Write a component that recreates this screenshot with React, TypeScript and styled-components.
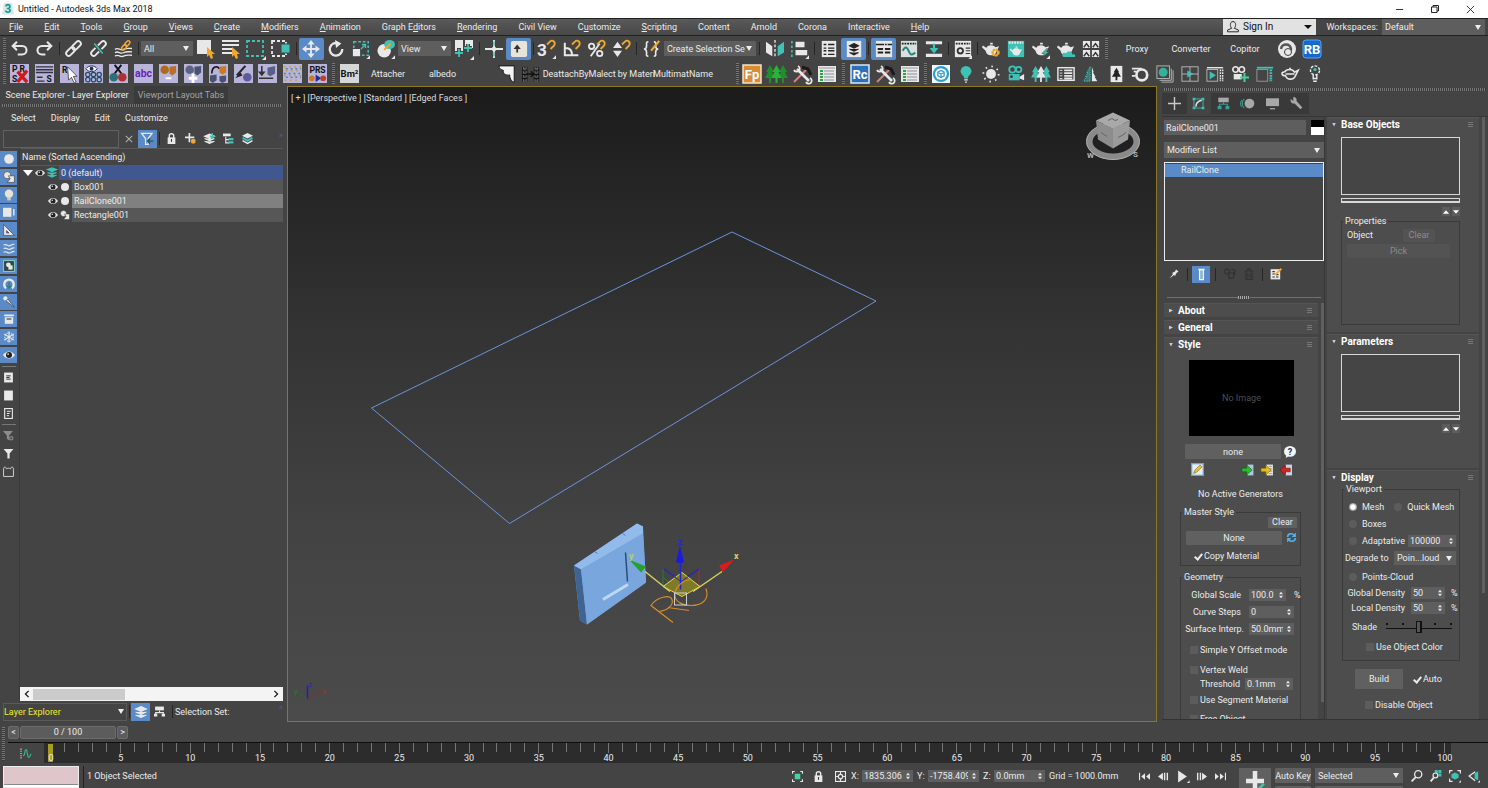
import React, { ReactNode } from "react";
import styled, { createGlobalStyle, css } from "styled-components";

const c = {
  bg: "#444444",
  panel: "#4d4d4d",
  field: "#5e5e5e",
  dark: "#383838",
  line: "#303030",
  text: "#ececec",
  dim: "#8c8c8c",
  accent: "#5a8bc8",
  teal: "#3fc1b6",
  amber: "#f2a72e",
  lilac: "#b8b4da",
};

const Global = createGlobalStyle`
  * { box-sizing: border-box; }
  body { margin: 0; background: ${c.bg}; color: ${c.text}; font-family: Roboto, sans-serif; font-size: 9px; line-height: 12px; }
  button, input, select { font: inherit; color: inherit; margin: 0; padding: 0; border: 0; background: none; }
  ul { margin: 0; padding: 0; list-style: none; }
`;

/* ---------- icons ---------- */

const W = "#e8e8e8";
const T = c.teal;
const A = c.amber;

const Glyph = styled.svg<{ $s?: number }>`
  display: block;
  flex: none;
  width: ${(p) => p.$s ?? 20}px;
  height: ${(p) => p.$s ?? 20}px;
  overflow: visible;
`;

const st = (color: string, w = 1.5) => ({ fill: "none", stroke: color, strokeWidth: w });
const Lilac = () => <rect x="0" y="0" width="20" height="20" fill={c.lilac} />;
const Flyout = () => <path d="M20 17v4h-4z" fill={W} />;
const Magnet = () => <path d="M10 5l3-3c3-3 7 0 5 4l-4 4" {...st(A, 2)} />;
const Teapot = ({ fill = W }: { fill?: string }) => (
  <path d="M5 8c2-3 8-3 10 0l4-1-3 6c-1 3-3 4-6 4s-5-1-6-5L0 8l1-2 4 3zM9 3h3v2H9z" fill={fill} />
);
const Tree = ({ x = 0, fill = W }: { x?: number; fill?: string }) => (
  <path transform={`translate(${x} 0)`} d="M5 1l4 7H7l3 6H6v5H4v-5H0l3-6H1z" fill={fill} />
);
const HammerWrench = () => (
  <>
    <path d="M2 18L14 6" {...st("#d98080", 2)} />
    <path d="M5 5l12 12" {...st(W, 2.6)} />
    <path d="M10 3l6 2 3 6" {...st("#1a1a1a", 3)} />
    <path d="M2 6a3 3 0 1 0 4-4M14 18a3 3 0 1 0 4-4" {...st(W, 1.8)} />
  </>
);
const ListSheet = () => (
  <>
    <rect x="1" y="2" width="18" height="16" fill={W} />
    <path d="M2 4h16" {...st("#9a9a9a", 1)} />
    <path d="M3 7h3M3 10h3M3 13h3M3 16h3" {...st("#28a83c", 2)} />
    <path d="M7 7h10M7 10h10M7 13h10M7 16h10" {...st("#8a929a", 1)} />
  </>
);

const icons: Record<string, ReactNode> = {
  undo: (<><path d="M2 7h11c7 0 7 10 0 10H8" {...st(W, 2.4)} /><path d="M7 2L2 7l5 5" {...st(W, 2.4)} /></>),
  redo: (<><path d="M18 7H7C0 7 0 17 7 17h4" {...st(W, 2.4)} /><path d="M13 2l5 5-5 5" {...st(W, 2.4)} /></>),
  link: (<g transform="rotate(-45 10 10)"><rect x="-1" y="7" width="12" height="6" rx="3" {...st(W, 2.2)} /><rect x="9" y="7" width="12" height="6" rx="3" {...st(W, 2.2)} /></g>),
  unlink: (<><g transform="rotate(-45 10 10)"><path d="M8 7H2a3 3 0 0 0 0 6h6M12 7h6a3 3 0 0 1 0 6h-6" {...st(W, 2.2)} /></g><path d="M5 4l10 12" {...st(T, 1.8)} /></>),
  bind: (<><path d="M0 11c4-3 6 2 10 0s6-1 10-1M0 15c4-3 6 2 10 0s6-1 10-1M0 19c4-3 6 2 10 0s6-1 10-1" {...st(W, 1.6)} /><g transform="rotate(-50 13 6)"><rect x="6" y="4" width="7" height="4" rx="2" {...st(A, 1.8)} /><rect x="12" y="4" width="7" height="4" rx="2" {...st(A, 1.8)} /></g></>),
  selObj: (<><rect x="1" y="1" width="14" height="14" fill={W} /><path d="M11 8l8 7h-3l1 4-2 1-2-4-2 2z" fill={A} /></>),
  selName: (<><path d="M1 2h17M1 6h17M1 10h10M1 14h10" {...st(W, 2)} /><path d="M11 8l8 7h-3l1 4-2 1-2-4-2 2z" fill={A} /></>),
  region: (<><rect x="1" y="2" width="16" height="15" {...st(T, 1.8)} strokeDasharray="3 2" /><Flyout /></>),
  windowX: (<><rect x="1" y="2" width="14" height="15" {...st(W, 1.8)} strokeDasharray="3 2" /><rect x="10" y="5" width="9" height="9" fill={T} stroke="#444" /></>),
  move: (<><path d="M10 3v14M3 10h14" {...st(W, 2)} /><path d="M10 0l4 5H6zM10 20l4-5H6zM0 10l5-4v8zM20 10l-5-4v8z" fill={W} /></>),
  rotate: (<><path d="M13 4A7 7 0 1 0 17 10" {...st(W, 2.6)} /><path d="M9 0l7 4-6 5z" fill={W} /></>),
  scale: (<><rect x="2" y="2" width="16" height="15" {...st(T, 1.8)} strokeDasharray="3 2" /><rect x="1" y="10" width="8" height="8" fill={W} /><path d="M10 10l5-5M11 5h4v4" {...st(T, 1.5)} /><Flyout /></>),
  place: (<><circle cx="8" cy="12" r="7.500" fill={W} /><ellipse cx="14" cy="5" rx="6" ry="5" fill={T} /><path d="M8 11l7-7" {...st(A, 2.2)} /><Flyout /></>),
  pivot: (<><path d="M1 1h8v11H1zM11 1h8v8h-8z" fill={W} /><path d="M5 9v8M1 14h8M14 5v8M10 9h8" {...st("#444", 4)} /><path d="M5 10v8M1 14h8M14 5v8M10 9h8" {...st(T, 1.8)} /><Flyout /></>),
  manip: (<><path d="M10 0v20M0 10h20" {...st(W, 2)} /><path d="M10 2v16" {...st(T, 1.6)} strokeDasharray="4 8" /><circle cx="10" cy="10" r="2.500" fill={W} /></>),
  keyb: (<><rect x="1" y="1" width="18" height="18" rx="2" fill="#e9e4d8" /><path d="M8 5l4 5H9v4H7v-4H4z" fill="#333" /></>),
  snap: (<><text x="-1" y="18" fontSize="19" fontWeight="700" fill={W} fontFamily="Roboto">3</text><Magnet /><Flyout /></>),
  angle: (<><path d="M2 3v14h15M3 9c5 0 7 3 7 8" {...st(W, 2.2)} /><Magnet /></>),
  percent: (<><circle cx="4" cy="7" r="3" {...st(W, 2)} /><circle cx="13" cy="15" r="3" {...st(W, 2)} /><path d="M3 18L13 4" {...st(W, 2)} /><Magnet /></>),
  spin: (<><path d="M5 2l5 7H0zM5 19l5-7H0z" fill={W} /><Magnet /></>),
  named: (<><path d="M6 2C3 2 4 4 4 6s0 4-3 4c3 0 3 2 3 4s-1 4 2 4M12 2c3 0 2 2 2 4s0 4 3 4c-3 0-3 2-3 4s1 4-2 4" {...st(W, 1.8)} /><path d="M9 12l9-11" {...st(A, 2.4)} /></>),
  mirror: (<><path d="M0 2l7 5v11l-7-4z" fill={W} /><path d="M20 2l-7 5v11l7-4z" fill={T} /><path d="M10 0v20" {...st(W, 1.5)} strokeDasharray="3 2" /></>),
  align: (<><path d="M1 1v19" {...st(T, 1.8)} strokeDasharray="3 2" /><path d="M5 2h10v6H5zM5 11h13v6H5z" fill={W} /><Flyout /></>),
  table: (<><rect x="2" y="1" width="16" height="18" fill={W} /><path d="M4 5h3M4 9h3M4 12h3M4 16h3M9 5h7M9 9h7M9 12h7M9 16h7" {...st("#222", 1.6)} /></>),
  layersOn: (<><rect x="2" y="1" width="16" height="18" fill={W} /><path d="M10 4l5 2.500-5 2.500-5-2.500zM5 10l5 2.500 5-2.500M5 14l5 2.500 5-2.500" fill="#222" stroke="#222" strokeWidth="1.200" /></>),
  ribbon: (<><rect x="1" y="1" width="18" height="18" fill={W} /><path d="M3 10h6M3 14h6M11 10h6M11 14h6" {...st("#222", 2.2)} /><path d="M1 5h18" {...st("#222", 1.5)} strokeDasharray="9 1 2 1" /></>),
  curve: (<><rect x="1" y="1" width="18" height="18" fill="#d9dede" /><path d="M2 4h16" {...st("#222", 2)} strokeDasharray="2 1" /><path d="M3 12c3-6 5-4 7 1s4 3 7 1" {...st("#26867f", 2.2)} /></>),
  schematic: (<><path d="M1 3h18M1 17h18" {...st(W, 3.500)} /><path d="M10 4v9" {...st(T, 2.4)} /><path d="M5 9l5 6 5-6z" fill={T} /></>),
  material: (<><rect x="1" y="1" width="18" height="18" fill={W} /><path d="M2 4h16" {...st("#222", 2)} strokeDasharray="2 1" /><circle cx="7" cy="12" r="4" fill="#333" /><circle cx="7" cy="12" r="2" fill={W} /><path d="M13 9h5M13 12h5M13 15h5" {...st("#333", 1.2)} /><Flyout /></>),
  rsetup: (<><Teapot /><circle cx="15" cy="14" r="3.200" {...st(A, 3)} strokeDasharray="2 1" /><circle cx="15" cy="14" r="3" {...st(A, 1.5)} /></>),
  rframe: (<><rect x="1" y="1" width="18" height="18" fill={T} /><path d="M2 3h16" {...st(W, 2.4)} strokeDasharray="2 1" /><g transform="translate(3 5) scale(.72)"><Teapot /></g></>),
  render: (<><Teapot /><path d="M17 9l-6 6h3l-2 4 7-6h-3z" fill={T} stroke="#444" strokeWidth=".6" /><Flyout /></>),
  rcloud: (<><Teapot /><path d="M7 19c-3-4 1-6 3-4 2-4 7-3 7 1 4-1 4 3 2 3z" fill={T} /></>),
  gallery: (<><path d="M1 1h8v8H1zM11 1h8v8h-8zM1 11h8v8H1zM11 11h8v8h-8z" fill={W} /><path d="M2 8l3-4 3 4M12 8l3-4 3 4M2 18l3-4 3 4M12 18l3-4 3 4" {...st("#333", 1.6)} /></>),
  ball: (<><circle cx="10" cy="10" r="9" fill={W} /><path d="M4 10c1-6 9-6 10 0 0 4-5 5-6 2" {...st("#555", 2.4)} /><circle cx="11" cy="13" r="3.500" fill={W} stroke="#444" /></>),
  rb: (<><rect x="1" y="1" width="18" height="18" rx="3" fill="#1668cc" stroke="#55a6f2" /><text x="10" y="15" fontSize="13" fontWeight="700" fill="#fff" textAnchor="middle" fontFamily="Roboto">RB</text></>),

  prsx: (<><Lilac /><text x="2" y="8" fontSize="9" fontWeight="700" fill="#111" fontFamily="Roboto">P R</text><text x="2" y="19" fontSize="9" fontWeight="700" fill="#111" fontFamily="Roboto">S</text><path d="M8 8l10 11M18 7L8 19" {...st("#d01818", 3.500)} /></>),
  lines: (<><Lilac /><path d="M1 3h18M1 6h18M1 9h18M2 14h6M2 18h8" {...st("#33333f", 1.5)} /><text x="12" y="19" fontSize="9" fontWeight="700" fill="#111" fontFamily="Roboto">S</text></>),
  rcur: (<><Lilac /><text x="2" y="9" fontSize="9" fontWeight="700" fill="#111" fontFamily="Roboto">R</text><path d="M8 3l10 10h-4l3 6-2 1-3-6-3 3z" fill="#fff" stroke="#333" strokeWidth=".8" /></>),
  eyes: (<><Lilac /><path d="M2 5c3-4 9-4 12 0-3 4-9 4-12 0z" fill="#fff" stroke="#222b66" /><circle cx="8" cy="5" r="2" fill="#222b66" /><g {...st("#224a6a", 1.3)}><circle cx="4" cy="11" r="2.300" /><circle cx="10" cy="11" r="2.300" /><circle cx="16" cy="11" r="2.300" /><circle cx="4" cy="16.500" r="2.300" /><circle cx="10" cy="16.500" r="2.300" /><circle cx="16" cy="16.500" r="2.300" /></g></>),
  xballs: (<><Lilac /><path d="M6 1l7 9M13 1l-7 9" {...st("#111", 2)} /><circle cx="5" cy="14" r="4.500" fill="#2d6f78" /><circle cx="14" cy="14" r="4.500" fill="#b03030" /></>),
  abc: (<><Lilac /><text x="10" y="14" fontSize="11" fontWeight="700" fill="#6a22b8" textAnchor="middle" fontFamily="Roboto">abc</text></>),
  minus: (<><Lilac /><circle cx="6" cy="6" r="4.500" fill="#b06a20" /><path d="M11 3l7-1v7l-4 3-3-2z" fill="#b87026" /><path d="M7 15h6" {...st("#fff", 2)} /></>),
  plusb: (<><Lilac /><circle cx="6" cy="6" r="4.500" fill="#5a6484" /><path d="M11 3l7-1v7l-4 3-3-2z" fill="#4a5270" /><path d="M5 15h9M9.500 10v10" {...st("#fff", 3)} /></>),
  swap: (<><Lilac /><path d="M3 10C3 3 8 1 11 5" {...st("#111", 1.6)} /><path d="M11 3l7-1v7l-4 2-3-2z" fill="#c97a22" /><path d="M1 12l7-1v6l-4 3-3-2zM11 13l7-1v6l-4 2-3-2z" fill="#4a5270" /></>),
  brush: (<><Lilac /><path d="M3 12L12 2" {...st("#222", 2.2)} /><path d="M1 15l6-6 2 3z" fill="#222" /><circle cx="14" cy="14" r="4.500" fill="#5c5c9c" /></>),
  down: (<><Lilac /><path d="M4 2v9M1 15h15" {...st("#333", 1.6)} /><path d="M0 8l4 5 4-5z" fill="#333" /><path d="M10 4l8-2v8l-5 3-3-2z" fill="#5a6084" /></>),
  noise: (<><Lilac /><path d="M1 3h18M3 7h16M1 12h18M2 17h16" {...st("#c9952f", 1.6)} strokeDasharray="1.500 4" /><path d="M3 5h16M1 10h18M3 14h16" {...st("#4a8a9a", 1.6)} strokeDasharray="2 3" /></>),
  prs: (<><Lilac /><text x="10" y="9" fontSize="9" fontWeight="700" fill="#111" textAnchor="middle" fontFamily="Roboto">PRS</text><circle cx="4" cy="15" r="3" fill="#c87a28" /><path d="M8 11l6 4-6 4z" fill="#1b2b9a" /><circle cx="16" cy="15" r="3" fill="#c04028" /></>),
  bm: (<><rect x="0" y="0" width="20" height="20" fill="#d6d6d6" /><text x="10" y="14" fontSize="10" fontWeight="700" fill="#111" textAnchor="middle" fontFamily="Roboto">Bm²</text></>),
  flag: (<path d="M1 1h17v18c-2 0-5-3-5-8-4 1-8-1-7-5-1-1-4 0-5-5z" fill="#f4f4f4" stroke="#111" />),
  film: (<><path d="M3 2v16M16 2v16" {...st("#111", 6)} /><path d="M3 2v16M16 2v16" {...st("#8a8a8a", 4)} strokeDasharray="3 1.500" /><path d="M3 2v16M16 2v16" {...st("#222", 2.500)} strokeDasharray="2 2.500" /><path d="M5 10h8M10 7l3 3-3 3" {...st("#111", 1.6)} /></>),
  fp: (<><rect x="1" y="1" width="18" height="18" fill="#d98c32" stroke="#f3e2c8" strokeWidth="1.500" /><text x="10" y="15" fontSize="13" fontWeight="700" fill="#fff" textAnchor="middle" fontFamily="Roboto">Fp</text></>),
  forest: (<><Tree fill="#1f8f2a" x={-2} /><Tree fill="#1f8f2a" x={11} /><Tree fill="#27b438" x={4.500} /></>),
  tools: <HammerWrench />,
  sheet: <ListSheet />,
  rc: (<><rect x="1" y="1" width="18" height="18" fill="#2d6fb8" stroke="#d9e8f6" strokeWidth="1.500" /><text x="10" y="15" fontSize="13" fontWeight="700" fill="#fff" textAnchor="middle" fontFamily="Roboto">Rc</text></>),
  corona: (<><rect x="0" y="0" width="20" height="20" fill="#f2f8fa" /><circle cx="10" cy="10" r="9" fill="#2b9fd0" /><circle cx="10" cy="10" r="6.500" fill="#fff" /><path d="M10 6l3.500 2v4L10 14l-3.500-2V8zM6.500 8l3.500 2 3.500-2M10 10v4" {...st("#2b9fd0", 1.4)} /></>),
  bulb: (<><circle cx="10" cy="7" r="6" fill={T} /><path d="M7 11h6l-1 4H8z" fill={T} /><path d="M8 16.500h4M9 19h2" {...st(W, 1.6)} /></>),
  sun: (<><circle cx="10" cy="10" r="5.500" fill={W} /><circle cx="10" cy="10" r="8.500" {...st(W, 2)} strokeDasharray="1.700 5" /></>),
  cam: (<><circle cx="6" cy="5" r="3.500" {...st(T, 2)} /><circle cx="13" cy="5" r="3" {...st(T, 2)} /><path d="M2 10h12v7H2z" fill={T} /><circle cx="5" cy="13" r="1.500" fill="#333" /><path d="M14 13l5-3v7l-5-2z" fill={W} /></>),
  trees: (<><Tree fill={T} x={-1} /><Tree fill={T} x={11} /><Tree x={5} /></>),
  listbox: (<><rect x="1" y="3" width="18" height="14" {...st(W, 1.6)} /><path d="M3 6h3M3 9h3M3 12h3M3 15h3" {...st(W, 1)} /><path d="M8 6h9M8 9h9M8 12h9M8 15h9" {...st(W, 2)} /></>),
  halftree: (<><path d="M9 2v16H2l3-5H4l3-5H6z" {...st(T, 1.4)} strokeDasharray="1 1" /><path d="M6 10l3-6v14H4z" fill={T} opacity=".4" /><path d="M11 2l2 6h-1l3 5h-1l3 5h-6z" fill={W} /></>),
  cardtree: (<><rect x="4" y="1" width="13" height="18" fill={W} /><path d="M10.500 3l3 5h-1l3 5h-4v4h-2v-4h-4l3-5h-1z" fill="#222" /></>),
  swirl: (<><circle cx="12" cy="11" r="6" {...st(W, 3)} /><path d="M1 4h11M3 7l5 1M1 12h4" {...st(W, 2)} /></>),
  stack: (<><path d="M6 19h13V6M4 17h13V4" {...st("#bbb", 1)} /><rect x="1" y="1" width="14" height="14" {...st("#bbb", 1)} /><circle cx="8" cy="8" r="5" fill="#35b09a" /></>),
  quad: (<><rect x="1" y="2" width="18" height="16" {...st("#bbb", 1)} /><path d="M1 10h18M10 2v16" {...st("#bbb", 1)} /><path d="M7 6l7 4-7 4z" fill={T} /></>),
  playwin: (<><rect x="1" y="5" width="12" height="13" {...st("#bbb", 1)} /><path d="M1 3h18" {...st(W, 1.6)} /><path d="M16 5v13M18.500 5v13" {...st(W, 1.6)} strokeDasharray="2 1" /><path d="M4 7l7 4.500L4 16z" fill={T} /></>),
  camadd: (<><circle cx="5" cy="5" r="3" {...st(W, 1.8)} /><circle cx="12" cy="5" r="3" {...st(W, 1.8)} /><path d="M3 10h9v6H3z" fill={W} /><path d="M15 9v10M10 14h10" {...st("#43d39a", 2.2)} /></>),
  tealwin: (<><rect x="1" y="5" width="12" height="13" {...st("#9a9a9a", 1)} /><path d="M1 3h18" {...st(T, 2)} /><path d="M16.500 5v13" {...st(T, 3)} strokeDasharray="2 1" /></>),
  potline: (<path d="M4 8c2-4 9-4 11 0l4-2-3 6c-2 5-9 5-11 0C0 12 0 7 4 8M5 10h10M9 4h2" {...st(W, 1.8)} />),
  bulbline: (<><circle cx="10" cy="6" r="5" {...st(W, 1.6)} strokeDasharray="3 1.500" /><circle cx="10" cy="5" r="1.800" fill={T} /><path d="M8 11v5M12 11v5M8 15h4M8 18h4" {...st(W, 1.6)} /></>),

  circle: <circle cx="10" cy="10" r="8" fill={W} />,
  shapes: (<><circle cx="7" cy="7" r="6" fill={W} stroke="#333" /><path d="M9 8h10v11H7l5-6z" fill={W} stroke="#333" /></>),
  light: (<><circle cx="10" cy="8" r="7" fill="#e8e4d4" /><path d="M7 14h6v5H7z" fill="#d0cbb8" /></>),
  camera: (<><rect x="0" y="3" width="14" height="15" fill={W} /><path d="M18 5v11" {...st(W, 2.4)} /></>),
  helper: (<path d="M1 1l18 18H1zM6 11v4h4z" fill={W} fillRule="evenodd" stroke="#333" />),
  waves: (<path d="M1 5c5-3 7 3 11 1s4-3 7-2M1 11c5-3 7 3 11 1s4-3 7-2M1 17c5-3 7 3 11 1s4-3 7-2" {...st(W, 2)} />),
  group: (<><rect x="1" y="1" width="18" height="18" fill="#2d4a4a" stroke="#8fd6c9" strokeWidth="1.500" /><circle cx="9" cy="8" r="4" fill={W} /><path d="M9 9h7v7H9z" fill={W} /></>),
  xref: (<><path d="M5 17a8 8 0 1 1 10 0" {...st(W, 4)} /><path d="M10 7v9M6 13l4 4 4-4" {...st("#2f7f78", 2.2)} /></>),
  bone: (<><circle cx="4" cy="4" r="3.500" fill={W} /><path d="M5 8l3-3 11 14z" fill={W} stroke="#333" /></>),
  container: (<><path d="M2 4h16" {...st(W, 3)} /><path d="M4 8h12v9H4z" stroke={W} strokeWidth="2" fill={W} /><path d="M6 10h8" {...st("#444", 2)} /></>),
  frozen: (<><path d="M10 1v18M2 5l16 10M18 5L2 15" {...st(W, 2)} /><circle cx="10" cy="10" r="7" {...st(W, 2)} strokeDasharray="2 2" /></>),
  eye: (<><path d="M0 10c5-8 15-8 20 0-5 8-15 8-20 0z" fill={W} /><circle cx="10" cy="10" r="5" fill="#222" /><circle cx="8.500" cy="8.500" r="1.500" fill={W} /></>),
  doc: (<><rect x="2" y="1" width="16" height="18" fill={W} /><path d="M6 7h8M6 10h6M6 13h8" {...st("#333", 1.8)} /></>),
  blank: <rect x="2" y="1" width="16" height="18" fill={W} />,
  docline: (<><rect x="3" y="1" width="14" height="18" {...st(W, 2)} /><path d="M7 6h7M7 10h5M7 14h4" {...st(W, 1.8)} /></>),
  funnelOff: (<><path d="M0 2h18l-7 8v9l-4-3v-6z" fill="#8c8c8c" /><circle cx="15" cy="15" r="3" {...st("#8c8c8c", 2)} /></>),
  funnel: <path d="M1 2h18l-7 8v9H8v-9z" fill={W} />,
  folder: <path d="M1 5c0-4 5-4 5 0 2 0 2-1 4-1s2 1 4 1c0-4 5-4 5 0v14H1z" {...st("#ccc", 1.8)} />,
  close: <path d="M2 2l16 16M18 2L2 18" {...st("#aaa", 3)} />,
  filterOn: (<><path d="M1 2h16l-6 8v9H7v-9z" {...st(W, 2)} /><path d="M19 14h-7M14 10l-4 4 4 4" {...st("#24524e", 2)} /></>),
  lock: (<><rect x="3" y="8" width="14" height="12" fill={W} /><path d="M6 9V5c0-5 8-5 8 0v4" {...st(W, 2.500)} /><path d="M10 11v5" {...st("#333", 2)} /></>),
  addLayer: (<><path d="M8 0v17M0 8h17" {...st(W, 3)} /><rect x="11" y="11" width="8" height="8" rx="2" fill={A} /></>),
  layersA: (<><path d="M10 2l9 4-9 4-9-4zM1 10l9 4 9-4M1 15l9 4 9-4" stroke={W} strokeWidth="2" fill={W} /><path d="M15 0v8M11 5l4 4 4-4" {...st(T, 2.500)} /></>),
  hier: (<><path d="M0 1h14v5H0z" fill={W} /><path d="M5 7v11h6M5 12h6" {...st(W, 2)} /><path d="M10 9h9v4h-9zM10 15h9v4h-9z" fill={T} /></>),
  layers: (<><path d="M10 0l10 5-10 5L0 5z" fill={W} /><path d="M1 9l9 5 9-5" {...st(T, 3.500)} /><path d="M1 14l9 5 9-5" {...st(W, 2.500)} /></>),
  layersT: (<path d="M1 3l9 4 9-4-9-3zM1 9l9 4 9-4M1 14l9 4 9-4" fill={T} stroke={T} strokeWidth="2.500" />),
  layersW: (<path d="M10 1l9 4-9 4-9-4zM1 10l9 4 9-4M1 15l9 4 9-4" fill={W} stroke={W} strokeWidth="1.800" />),
  org: (<><rect x="2" y="1" width="16" height="7" fill={W} /><path d="M10 8v4M3 18v-6h14v6" {...st(W, 2)} /><path d="M0 14h6v5H0zM14 14h6v5h-6z" fill={W} /></>),

  create: <path d="M10 0v20M0 10h20" {...st("#c9c9c9", 2.2)} />,
  modify: (<><rect x="3" y="3" width="14" height="14" {...st(T, 1.3)} /><path d="M1 1h4v4H1zM15 1h4v4h-4zM1 15h4v4H1zM15 15h4v4h-4z" fill={T} /><path d="M6 15c0-6 4-9 9-10" {...st(W, 2.2)} /></>),
  hierarchy: (<><rect x="2" y="1" width="16" height="7" fill="#a8a8a8" /><path d="M10 8v3M4 18v-7h12v7" {...st("#3b9e97", 1.6)} /><path d="M1 14h6v5H1zM13 14h6v5h-6z" fill="#3b9e97" /></>),
  motion: (<><circle cx="13" cy="10" r="7.500" fill="#a8a8a8" /><path d="M5 3c-4 4-4 10 0 14M1 5c-2 3-2 7 0 10" {...st("#3b9e97", 1.6)} /></>),
  display: (<><rect x="0" y="2" width="20" height="12" fill="#a8a8a8" /><path d="M6 18h8" {...st("#a8a8a8", 2)} /></>),
  wrench: (<path d="M1 3l4 3V0c4 0 6 3 5 6l9 10-3 3-9-9C3 11 0 7 1 3z" fill="#a8a8a8" />),
  pin: (<path d="M19 5l-5-4-2 4-6 3 2 2-7 9 9-7 2 2 3-6z" fill={W} />),
  tube: (<><path d="M5 2h10M7 3h6v15H7z" fill="#8fb9c9" stroke="#e9f6f6" strokeWidth="1.800" /></>),
  unique: (<><circle cx="5" cy="6" r="4" {...st("#333", 2)} /><path d="M8 8h8v9H8zM12 3h6v9" {...st("#333", 2)} /></>),
  trash: (<path d="M3 5h14M8 4V1h4v3M5 6v13h10V6M8 9v7M12 9v7" {...st("#333", 2)} />),
  config: (<><rect x="1" y="2" width="16" height="17" fill={W} /><path d="M4 6h4M4 10h4M4 15h4M10 11h4M10 15h4" {...st("#333", 2)} /><path d="M9 11L19 1" {...st(A, 3)} /></>),
  help: (<><ellipse cx="10" cy="9" rx="10" ry="9" fill="#f2f5f8" /><path d="M4 14l-1 6 6-4z" fill="#f2f5f8" /><text x="10" y="14.500" fontSize="15" fontWeight="700" fill="#1d2c50" textAnchor="middle" fontFamily="Roboto">?</text></>),
  pencil: (<><rect x="1" y="1" width="18" height="18" fill="#e4eef4" stroke="#67a6d4" strokeWidth="2" /><path d="M4 16l2-5 8-8 3 3-8 8z" fill="#f0c03a" stroke="#8a6620" /></>),
  arrG: (<><rect x="9" y="1" width="10" height="18" fill="#a9c8de" /><path d="M0 7h8V2l9 8-9 8v-5H0z" fill="#2bc02b" stroke="#136313" /></>),
  arrY: (<><rect x="9" y="1" width="11" height="18" fill="#e8e4d8" /><path d="M13 4h6M13 8h6M13 12h6M13 16h6" {...st("#777", 1)} /><path d="M0 7h8V2l9 8-9 8v-5H0z" fill="#e6bc1c" stroke="#7a6210" /></>),
  arrR: (<><rect x="9" y="1" width="11" height="18" fill="#c8d4e4" /><path d="M17 7H9V2l-9 8 9 8v-5h8z" fill="#d82020" stroke="#701010" /></>),
  refresh: (<><path d="M3 9c0-6 8-8 12-3M17 11c0 6-8 8-12 3" {...st("#58aee6", 3)} /><path d="M18 1v8h-8zM2 19v-8h8z" fill="#58aee6" /></>),
  curveMini: (<><path d="M0 1v18" {...st(W, 2)} strokeDasharray="2 2" /><path d="M4 14c4 0 2-11 5-11s2 14 5 14 2-6 5-6" {...st("#2fb88c", 2.200)} /></>),
  isolate: (<><path d="M1 5V1h4M15 1h4v4M19 15v4h-4M5 19H1v-4" {...st(W, 2)} /><rect x="5" y="5" width="10" height="10" fill="#43d3a4" /></>),
  abs: (<><rect x="1" y="1" width="18" height="18" {...st(W, 2)} /><circle cx="10" cy="10" r="4" {...st(W, 2.200)} /><path d="M10 2v5M10 13v5M2 10h5M13 10h5" {...st(W, 2.200)} /></>),
  first: (<><path d="M1 3v14" {...st(W, 2)} /><path d="M11 4v12l-7-6zM20 4v12l-7-6z" fill={W} /></>),
  prev: (<><path d="M9 3v14l-9-7z" fill={W} /><path d="M12 3v14M17 3v14" {...st(W, 2.500)} /></>),
  play: (<><path d="M2-1l16 11L2 21z" fill={W} /><path d="M23 17v5h-5z" fill={W} /></>),
  next: (<><path d="M11 3v14l9-7z" fill={W} /><path d="M3 3v14M8 3v14" {...st(W, 2.500)} /></>),
  last: (<><path d="M19 3v14" {...st(W, 2)} /><path d="M9 4v12l7-6zM0 4v12l7-6z" fill={W} /></>),
  key: (<><path d="M10 0v22M0 11h20" {...st(W, 5)} /><path d="M14 20l6-6" {...st("#43c3a4", 3)} /></>),
  zoom: (<><circle cx="12" cy="7" r="6" {...st(W, 2.200)} /><path d="M8 12l-7 7" {...st(W, 3)} /></>),
  zoomAll: (<><path d="M8 0h5v5H8zM14 0h5v5h-5zM14 6h5v5h-5z" fill={T} /><circle cx="9" cy="9" r="4" {...st(W, 2)} /><path d="M6 13l-5 6" {...st(W, 3)} /></>),
  extents: (<><path d="M1 6V1h5M14 1h5v5M6 19H1v-5" {...st(W, 2)} /><path d="M10 4l6 3v6l-6 3-6-3V7z" fill={T} /><Flyout /></>),
  fov: (<><path d="M12 3L2 10l10 8" {...st(W, 2.200)} /><path d="M11 6l6-4v15l-6-3z" fill={T} /><Flyout /></>),
  user: (<path d="M10 1c6 0 5 9 2 11l7 3v3H1v-3l7-3C5 10 4 1 10 1z" {...st("#222", 1.6)} />),
  logo: (<><path d="M3 0h14l3 19H0z" fill="#d3ebe9" /><text x="10" y="17" fontSize="20" fontWeight="700" fill="#1c8f92" textAnchor="middle" fontFamily="Roboto">3</text></>),
  minimize: <path d="M2 10h16" {...st("#222", 2)} />,
  restore: <path d="M3 6h11v11H3zM6 6V3h11v11h-3" {...st("#222", 2)} />,
  quit: <path d="M2 2l16 16M18 2L2 18" {...st("#222", 2)} />,
};

const Icon = ({ n, s }: { n: string; s?: number }) => (
  <Glyph viewBox="0 0 20 20" $s={s} aria-hidden="true">
    {icons[n]}
  </Glyph>
);

/* ---------- shared controls ---------- */

const caret = css`
  appearance: none;
  background-image: url("data:image/svg+xml,%3Csvg xmlns='http://www.w3.org/2000/svg' viewBox='0 0 6 5'%3E%3Cpath d='M0 0h6L3 5z' fill='%23eeeeee'/%3E%3C/svg%3E");
  background-size: 6px 5px;
  background-position: right 4px center;
  background-repeat: no-repeat;
`;

const Select = styled.select<{ $w?: number; $h?: number; $m?: string }>`
  ${caret};
  flex: none;
  width: ${(p) => (p.$w ? `${p.$w}px` : "100%")};
  height: ${(p) => p.$h ?? 15}px;
  margin: ${(p) => p.$m ?? 0};
  padding: 0 10px 0 3px;
  background-color: ${c.field};
`;

const IconButton = styled.button<{ $active?: boolean }>`
  flex: 1 1 0;
  min-width: 0;
  height: 22px;
  display: flex;
  align-items: center;
  justify-content: center;
  border-radius: 2px;
  ${(p) => p.$active && css`background: ${c.accent};`}
`;

const TextButton = styled.button<{ $w?: number; $h?: number; $dim?: boolean; $flat?: boolean }>`
  flex: none;
  width: ${(p) => (p.$w ? `${p.$w}px` : "auto")};
  height: ${(p) => p.$h ?? 15}px;
  display: flex;
  align-items: center;
  justify-content: center;
  border-radius: 1px;
  white-space: nowrap;
  background: ${(p) => (p.$flat ? "none" : p.$dim ? "#535353" : "#606060")};
  color: ${(p) => (p.$dim ? c.dim : c.text)};
`;

const Field = styled.input<{ $w?: number; $h?: number }>`
  width: ${(p) => (p.$w ? `${p.$w}px` : "100%")};
  min-width: 0;
  height: ${(p) => p.$h ?? 15}px;
  padding: 0 2px;
  background: ${c.field};
`;

const SpinBox = styled.span<{ $w: number }>`
  flex: none;
  display: flex;
  align-items: center;
  width: ${(p) => p.$w}px;
  height: 12px;
  padding-right: 1px;
  background: ${c.field};
`;

const Spin = ({ label, value, w }: { label: string; value: string; w: number }) => (
  <SpinBox $w={w}>
    <Field $h={12} aria-label={label} defaultValue={value} />
    <Glyph viewBox="0 0 20 20" $s={8} aria-hidden="true">
      <path d="M10 2l5 6H5zM10 18l5-6H5z" fill={W} />
    </Glyph>
  </SpinBox>
);

const Check = styled.input.attrs({ type: "checkbox" })`
  appearance: none;
  flex: none;
  width: 8px;
  height: 8px;
  display: flex;
  justify-content: center;
  background: #5c5c5c;
  &:checked { background: none; }
  &:checked::after {
    content: "";
    width: 3px;
    height: 6px;
    border: solid ${c.text};
    border-width: 0 2px 2px 0;
    transform: rotate(40deg);
  }
`;

const Radio = styled.input.attrs({ type: "radio" })`
  appearance: none;
  flex: none;
  width: 8px;
  height: 8px;
  border-radius: 50%;
  background: #5c5c5c;
  &:checked { background: radial-gradient(circle, #fff 2px, #888 4px); }
`;

const Label = styled.label<{ $gap?: number }>`
  display: flex;
  align-items: center;
  gap: ${(p) => p.$gap ?? 2}px;
  white-space: nowrap;
`;

const Row = styled.div<{ $h?: number; $pl?: number; $pr?: number; $gap?: number; $mt?: number }>`
  flex: none;
  display: flex;
  align-items: center;
  height: ${(p) => p.$h ?? 17}px;
  padding: 0 ${(p) => p.$pr ?? 0}px 0 ${(p) => p.$pl ?? 0}px;
  margin-top: ${(p) => p.$mt ?? 0}px;
  gap: ${(p) => p.$gap ?? 0}px;
  white-space: nowrap;
`;

const Caption = styled.span<{ $w: number }>`
  flex: none;
  width: ${(p) => p.$w}px;
  text-align: right;
`;

/* ---------- frame ---------- */

const Shell = styled.div`
  height: 100vh;
  display: flex;
  flex-direction: column;
  overflow: hidden;
`;

const TitleBar = styled.header`
  flex: none;
  height: 18px;
  display: flex;
  align-items: center;
  gap: 4px;
  padding-left: 2px;
  background: #fff;
  color: #111;
`;

const Caps = styled.div`
  margin-left: auto;
  width: 106px;
  display: flex;
`;

const MenuBar = styled.nav`
  flex: none;
  height: 18px;
  display: flex;
  align-items: stretch;
  border: solid #222;
  border-width: 1px 0;
  background: linear-gradient(#595959, #484848);
`;

const MenuList = styled.ul`
  display: flex;
  align-items: center;
  gap: 21px;
  padding-left: 9px;
`;

const MenuButton = styled.button`
  display: block;
  white-space: nowrap;
`;

const SignIn = styled.button`
  margin-left: auto;
  width: 93px;
  display: flex;
  align-items: center;
  gap: 4px;
  padding: 0 4px;
  background: #e2e2e2;
  color: #111;
  font-size: 10px;
`;

const DownMark = styled.span`
  margin-left: auto;
  border: 4px solid transparent;
  border-top-color: #111;
  border-bottom-width: 0;
`;

const Workspaces = styled.label`
  width: 172px;
  padding-right: 3px;
  display: flex;
  align-items: center;
  justify-content: flex-end;
  gap: 4px;
  background: ${c.bg};
`;

const ToolRow = styled.div`
  flex: none;
  height: 25px;
  display: flex;
  align-items: center;
`;

const Group = styled.div<{ $w: number; $ml?: number }>`
  flex: none;
  width: ${(p) => p.$w}px;
  margin-left: ${(p) => p.$ml ?? 0}px;
  display: flex;
`;

const Sep = styled.span<{ $w: number }>`
  flex: none;
  width: ${(p) => p.$w}px;
  height: 13px;
  background: linear-gradient(#262626, #262626) center / 1px 100% no-repeat;
`;

const Grip = styled.span<{ $w: number; $ml?: number }>`
  flex: none;
  width: ${(p) => p.$w}px;
  height: 21px;
  margin-left: ${(p) => p.$ml ?? 0}px;
  background: repeating-linear-gradient(#777 0 1px, #3a3a3a 1px 2px) center / 3px 100% no-repeat;
`;

const ToolGroup = ({ w, names, active = [], s = 20, ml }: { w: number; names: string[]; active?: string[]; s?: number; ml?: number }) => (
  <Group $w={w} $ml={ml}>
    {names.map((n) => (
      <IconButton key={n} $active={active.includes(n)} aria-label={n}>
        <Icon n={n} s={s} />
      </IconButton>
    ))}
  </Group>
);

const Main = styled.main`
  flex: 1 1 0;
  min-height: 0;
  display: flex;
`;

/* ---------- scene explorer ---------- */

const Explorer = styled.aside`
  flex: none;
  width: 287px;
  display: flex;
  flex-direction: column;
  padding-right: 4px;
`;

const Tabs = styled.div`
  flex: none;
  height: 18px;
  display: flex;
`;

const Tab = styled.button<{ $w: number; $on?: boolean }>`
  width: ${(p) => p.$w}px;
  color: ${(p) => (p.$on ? c.text : "#a2a2a2")};
  background: ${(p) => (p.$on ? c.bg : "#3b3b3b")};
  white-space: nowrap;
`;

const Dots = styled.div<{ $mt?: number }>`
  flex: none;
  height: 3px;
  margin: ${(p) => p.$mt ?? 0}px 2px 0;
  background: repeating-linear-gradient(90deg, #777 0 1px, #3a3a3a 1px 2px);
`;

const ExplorerMenu = styled.div`
  flex: none;
  height: 22px;
  display: flex;
  align-items: center;
  gap: 15px;
  padding-left: 11px;
`;

const SearchRow = styled.div`
  flex: none;
  height: 19px;
  display: flex;
  align-items: center;
  padding-left: 3px;
`;

const SearchField = styled.input`
  width: 116px;
  height: 18px;
  background: #434343;
  border: 1px solid #616161;
`;

const SmallButton = styled.button<{ $active?: boolean; $w?: number; $h?: number }>`
  flex: none;
  width: ${(p) => p.$w ?? 19}px;
  height: ${(p) => p.$h ?? 18}px;
  display: flex;
  align-items: center;
  justify-content: center;
  ${(p) => p.$active && css`background: ${c.accent};`}
`;

const More = styled.span`
  align-self: flex-start;
  margin-left: auto;
  color: #4a5aa8;
`;

const ExplorerBody = styled.div`
  flex: 1 1 0;
  min-height: 0;
  display: flex;
`;

const SideBar = styled.div`
  flex: none;
  width: 19px;
  padding-top: 3px;
`;

const SideStack = styled.div<{ $h: number }>`
  height: ${(p) => p.$h}px;
  width: 17px;
  display: flex;
  flex-direction: column;
  justify-content: space-between;
`;

const SideRule = styled.hr`
  width: 14px;
  margin: 3px 2px;
  border: 0;
  border-top: 1px solid #777;
`;

const TreePane = styled.div`
  flex: 1 1 0;
  display: flex;
  flex-direction: column;
  border-left: 1px solid #3a3a3a;
`;

const TreeHead = styled.div`
  height: 18px;
  padding-left: 2px;
  line-height: 16px;
  border: solid #585858;
  border-width: 1px 0;
`;

const TreeRow = styled.li<{ $pl: number }>`
  height: 14px;
  display: flex;
  align-items: center;
  gap: 2px;
  padding-left: ${(p) => p.$pl}px;
`;

const TreeArrow = styled.span`
  flex: none;
  border: 5px solid transparent;
  border-top: 6px solid #fff;
  border-bottom-width: 0;
`;

const TreeName = styled.span<{ $bg: string }>`
  flex: 1;
  height: 14px;
  padding-left: 2px;
  line-height: 14px;
  background: ${(p) => p.$bg};
`;

const HScroll = styled.div`
  margin-top: auto;
  height: 14px;
  display: flex;
  align-items: center;
  padding: 0 3px;
  background: #f4f4f4;
`;

const HThumb = styled.div`
  width: 92px;
  height: 11px;
  margin: 0 auto 0 2px;
  background: #cbcbcb;
`;

const ExplorerFoot = styled.div`
  flex: none;
  height: 21px;
  display: flex;
  align-items: center;
  padding-left: 3px;
`;

const LayerBox = styled.select`
  ${caret};
  background-position: right 2px center;
  width: 124px;
  height: 18px;
  color: #f0ea30;
  border: 1px solid #5a5a5a;
`;

/* ---------- viewport ---------- */

const Viewport = styled.section`
  flex: 1 1 0;
  min-width: 0;
  display: flex;
  flex-direction: column;
  border: 1px solid #8c7722;
  background: linear-gradient(#1b1b1b, #333 38%, #434343 70%, #4b4b4b);
`;

const ViewLabel = styled.div`
  flex: none;
  height: 20px;
  padding: 1px 0 0 3px;
  line-height: 20px;
  color: #dcdcdc;
`;

const Scene = styled.svg`
  flex: 1 1 0;
  min-height: 0;
  width: 100%;
  display: block;
`;

/* ---------- command panel ---------- */

const Command = styled.aside`
  flex: none;
  width: 331px;
  display: flex;
  flex-direction: column;
  padding-left: 5px;
`;

const CommandTabs = styled.div`
  flex: none;
  height: 21px;
  margin: 2px 0;
  width: 147px;
  display: flex;
  background: #393939;
`;

const CommandTab = styled.button<{ $on?: boolean }>`
  flex: 1;
  display: flex;
  align-items: center;
  justify-content: center;
  background: ${(p) => (p.$on ? c.bg : "none")};
`;

const Columns = styled.div`
  flex: 1 1 0;
  min-height: 0;
  display: flex;
  overflow: hidden;
  border-bottom: 1px solid #333;
  margin-bottom: 2px;
`;

const ColumnA = styled.div`
  flex: none;
  width: 162px;
  display: flex;
  flex-direction: column;
  padding: 3px 0 0 2px;
  border-top: 1px solid #363636;
  overflow: hidden;
`;

const ColumnB = styled.div`
  flex: 1;
  display: flex;
  gap: 3px;
  padding: 0 3px 0 2px;
  border: solid #383838;
  border-width: 1px 0 0 1px;
  overflow: hidden;
`;

const NameRow = styled.div`
  display: flex;
  gap: 5px;
  margin-bottom: 7px;
`;

const Swatch = styled.span`
  flex: none;
  width: 13px;
  height: 15px;
  background: linear-gradient(#000 50%, #fff 50%);
`;

const Stack = styled.ul`
  height: 99px;
  margin: 4px 0;
  border: 1px solid #ececec;
  padding-top: 1px;
`;

const StackItem = styled.li`
  height: 13px;
  padding-left: 16px;
  line-height: 13px;
  background: ${c.accent};
`;

const StackBar = styled.div`
  display: flex;
  align-items: center;
  height: 18px;
`;

const Splitter = styled.div`
  flex: none;
  height: 3px;
  margin: 13px 3px 4px;
  background:
    repeating-linear-gradient(90deg, #aaa 0 1px, #444 1px 2px) center / 12px 3px no-repeat,
    linear-gradient(#707070, #707070) center / 100% 1px no-repeat;
`;

const RollArea = styled.div`
  flex: 1 1 0;
  min-height: 0;
  display: flex;
  gap: 3px;
  overflow: hidden;
`;

const Rolls = styled.div<{ $gap: number }>`
  flex: 1;
  min-width: 0;
  display: flex;
  flex-direction: column;
  gap: ${(p) => p.$gap}px;
`;

const Rollout = styled.section<{ $h?: number; $grow?: boolean }>`
  flex: none;
  ${(p) => p.$h && css`height: ${p.$h}px;`}
  ${(p) => p.$grow && css`flex: 1 0 auto;`}
  background: ${c.panel};
  border-top: 1px solid #555;
`;

const RollHead = styled.h2`
  margin: 0;
  height: 13px;
  display: flex;
  align-items: center;
  gap: 5px;
  padding: 0 6px 0 5px;
  font-size: 10px;
  font-weight: 700;
  color: #fff;
`;

const Mark = styled.span<{ $open?: boolean }>`
  width: 4px;
  height: 4px;
  background: #ccc;
  clip-path: ${(p) => (p.$open ? "polygon(0 0, 100% 0, 50% 100%)" : "polygon(0 0, 100% 50%, 0 100%)")};
`;

const Pad = styled.span`
  margin-left: auto;
  width: 5px;
  height: 5px;
  background: repeating-linear-gradient(#777 0 1px, transparent 1px 2px);
`;

const Head = ({ open, children }: { open?: boolean; children: ReactNode }) => (
  <RollHead>
    <Mark $open={open} />
    {children}
    <Pad />
  </RollHead>
);

const VBar = styled.div<{ $len: number }>`
  flex: none;
  width: 3px;
  height: ${(p) => p.$len}%;
  background: #606060;
`;

const StyleBody = styled.div`
  padding: 9px 17px 0 16px;
`;

const Preview = styled.div`
  height: 76px;
  margin: 0 7px 8px 9px;
  display: flex;
  align-items: center;
  justify-content: center;
  background: #000;
  color: #4e4e4e;
`;

const Push = styled.span`
  margin-left: auto;
`;

const Frame = styled.fieldset<{ $h?: number; $m?: string }>`
  margin: ${(p) => p.$m ?? 0};
  padding: 0;
  min-width: 0;
  ${(p) => p.$h && css`height: ${p.$h}px;`}
  border: 1px solid #3a3a3a;
  & > legend { margin-left: 1px; padding: 0 2px; height: 10px; line-height: 10px; }
`;

const ObjBody = styled.div`
  padding: 6px 19px 0 14px;
`;

const ObjBox = styled.div`
  height: 58px;
  border: 1px solid #d8d8d8;
  background: #454545;
`;

const ObjBar = styled.div`
  height: 5px;
  margin: 3px 0 4px;
  border: 1px solid #d8d8d8;
  border-bottom-width: 2px;
`;

const Nudge = styled.div`
  display: flex;
  justify-content: flex-end;
  gap: 2px;
`;

const NudgeButton = styled.button`
  width: 8px;
  height: 9px;
  display: flex;
  align-items: center;
  justify-content: center;
  background: #5c5c5c;
`;

const ObjList = () => (
  <>
    <ObjBox />
    <ObjBar />
    <Nudge>
      <NudgeButton aria-label="Move up"><Glyph viewBox="0 0 10 10" $s={6}><path d="M5 2l5 6H0z" fill="#fff" /></Glyph></NudgeButton>
      <NudgeButton aria-label="Move down"><Glyph viewBox="0 0 10 10" $s={6}><path d="M5 8l5-6H0z" fill="#fff" /></Glyph></NudgeButton>
    </Nudge>
  </>
);

const Range = styled.input.attrs({ type: "range" })`
  appearance: none;
  width: 66px;
  height: 14px;
  background:
    repeating-linear-gradient(90deg, #111 0 2px, transparent 2px 16px) 0 3px / 100% 2px no-repeat,
    linear-gradient(#111, #111) 0 8px / 100% 1px no-repeat;
  &::-webkit-slider-thumb {
    appearance: none;
    width: 6px;
    height: 12px;
    background: #555;
    border: 1px solid #111;
    border-right-width: 2px;
  }
`;

/* ---------- timeline and status ---------- */

const Timeline = styled.section`
  flex: none;
  height: 41px;
  display: flex;
`;

const TallGrip = styled.span`
  flex: none;
  width: 8px;
  margin: 5px 0 2px;
  background: repeating-linear-gradient(#777 0 1px, #3a3a3a 1px 2px) 2px 0 / 3px 100% no-repeat;
`;

const TimeBody = styled.div`
  flex: 1;
  min-width: 0;
`;

const SliderRow = styled.div`
  height: 20px;
  display: flex;
  align-items: center;
  gap: 1px;
`;

const TimeButton = styled.button<{ $w: number }>`
  width: ${(p) => p.$w}px;
  height: 13px;
  line-height: 11px;
  border: 1px solid #6c6c6c;
  border-radius: 2px;
  background: #5c5c5c;
`;

const RulerRow = styled.div`
  height: 21px;
  display: flex;
  border-top: 1px solid #0e0e0e;
`;

const RulerIcon = styled.div`
  flex: none;
  width: 36px;
  display: flex;
  align-items: center;
  justify-content: center;
`;

const Ruler = styled.div`
  flex: 1;
  display: flex;
  margin-right: 37px;
  background: #2c2c2c;
`;

const Tick = styled.div<{ $major: boolean; $cur: boolean }>`
  flex: 1 1 0;
  min-width: 0;
  display: flex;
  justify-content: center;
  align-items: flex-end;
  line-height: 10px;
  white-space: nowrap;
  background: linear-gradient(#777, #777) center top / 1px ${(p) => (p.$major ? 10 : 9)}px no-repeat;
  ${(p) => p.$cur && css`background: linear-gradient(#a89a22, #a89a22) center / 5px 18px no-repeat;`}
`;

const Status = styled.footer`
  flex: none;
  height: 25px;
  display: flex;
  overflow: hidden;
  padding: 3px 10px 0 3px;
`;

const Listener = styled.div`
  flex: none;
  width: 76px;
  height: 22px;
  background: linear-gradient(#dfc6ca 0 17px, #8c8c8c 17px 18px, #fff 18px);
  border: 1px solid #eee;
`;

const StatusText = styled.div`
  flex: 1;
  margin-left: 4px;
  padding-left: 3px;
  line-height: 21px;
  border-left: 1px solid #222;
`;

const Strip = styled.div<{ $w?: number; $mr?: number }>`
  flex: none;
  display: flex;
  align-items: center;
  height: 20px;
  ${(p) => p.$w && css`width: ${p.$w}px;`}
  margin-right: ${(p) => p.$mr ?? 0}px;
  white-space: nowrap;
`;

const Coord = styled.label`
  display: flex;
  align-items: center;
  justify-content: space-between;
  width: 62px;
  margin-right: 4px;
`;

const KeyButton = styled.button`
  flex: none;
  width: 32px;
  height: 24px;
  margin-top: 2px;
  display: flex;
  align-items: flex-start;
  justify-content: center;
  padding-top: 3px;
  background: #606060;
`;

const KeyColumn = styled.div<{ $w: number; $ml: number }>`
  flex: none;
  width: ${(p) => p.$w}px;
  margin-left: ${(p) => p.$ml}px;
  padding-top: 2px;
  display: flex;
  flex-direction: column;
  gap: 3px;
`;

/* ---------- content ---------- */

const menus = ["&File", "&Edit", "&Tools", "&Group", "&Views", "&Create", "&Modifiers", "&Animation", "Graph E&ditors", "&Rendering", "Civil View", "C&ustomize", "&Scripting", "Content", "Arnold", "Corona", "Interactive", "&Help"];

const MenuName = ({ name }: { name: string }) => {
  const at = name.indexOf("&");
  if (at < 0) return <>{name}</>;
  return (
    <>
      {name.slice(0, at)}
      <u>{name[at + 1]}</u>
      {name.slice(at + 2)}
    </>
  );
};

const filters = ["circle", "shapes", "light", "camera", "helper", "waves", "group", "xref", "bone", "container", "frozen", "eye"];
const objects = [
  { name: "Box001", icon: "circle", bg: "#575757" },
  { name: "RailClone001", icon: "circle", bg: "#808080" },
  { name: "Rectangle001", icon: "shapes", bg: "#575757" },
];

const SceneDrawing = () => (
  <Scene viewBox="288 108 868 613" preserveAspectRatio="xMidYMid meet" role="img" aria-label="Perspective scene">
    <g>
      <ellipse cx="1113" cy="142" rx="23.500" ry="15" fill="none" stroke="#8a8a8a" strokeWidth="6" />
      <ellipse cx="1113" cy="142" rx="26.500" ry="18" fill="none" stroke="#b0b0b0" strokeWidth="1" />
      <path d="M1113 113l17 8-17 8-17-8z" fill="#a9a9a9" />
      <path d="M1096 121l17 8v20l-15-9z" fill="#8d8d8d" />
      <path d="M1130 121l-17 8v20l15-9z" fill="#9b9b9b" />
      <path d="M1108 121l4-2 3 2 3-1M1101 133l3 2 3 2M1118 138l4-2 4-3" stroke="#666" fill="none" />
      <g fill="#b4b4b4" fontSize="8" fontWeight="700" fontFamily="Roboto">
        <text x="1087" y="158">W</text>
        <text x="1133" y="157">S</text>
      </g>
    </g>
    <path d="M371.500 408.500L732 232.500l144 69-366.500 222.500z" fill="none" stroke="#6b93dc" strokeWidth="1" />
    <g>
      <path d="M574 566l63-42 6 3 3 56-59 42-7-4z" fill="#6f9fdb" />
      <path d="M574 566l7 3 6 56-7-4z" fill="#3f6493" />
      <path d="M574 566l63-42 6 3v7l-62 36z" fill="#92bbec" />
      <path d="M581 570l62-36 3 49-59 42z" fill="#7aa6de" />
      <path d="M625.500 553l2 29" stroke="#2b4d78" strokeWidth="1.500" />
      <path d="M603 600l25-15" stroke="#bcd8f7" strokeWidth="3" fill="none" />
      <path d="M595 552l2 2M623 534l2 2" stroke="#3f6493" />
    </g>
    <g fill="none">
      <path d="M663 587V570M663 578l18 13" stroke="#2c7a34" />
      <path d="M699 587V569M699 587l-18-12" stroke="#a03030" />
      <path d="M664 569l17 12 18-12M681 581v10" stroke="#2a2aa8" />
      <path d="M663 587l19-14 18 14-18 10z" fill="#7f7a28" stroke="#e0d850" />
      <path d="M664 570l17 12 18-12" stroke="#2a2aa8" />
      <path d="M670 592l-25-20M693 592l29-20" stroke="#d8d060" strokeWidth="1.500" />
      <path d="M680.500 590v-28" stroke="#2222dd" strokeWidth="1.500" />
      <path d="M680 546l4 16c-2 2-6 2-8 0z" fill="#1a1ae0" />
      <path d="M629 560l17 7-5 6z" fill="#28a030" />
      <path d="M734 560l-15 6 4 7z" fill="#d81c1c" />
      <path d="M673 623l-22-17c6-9 19-11 21-6 2 5-4 11-13 12M668 608l21 3" stroke="#d88a2a" strokeWidth="1.200" />
      <path d="M706 589c4 12-5 17-15 17-9 0-15-4-16-9-1-8 6-16 16-17" stroke="#d88a2a" strokeWidth="1.200" />
      <rect x="674.500" y="593.500" width="12" height="12" stroke="#d0d0d0" />
    </g>
    <g fontFamily="Roboto" fontSize="9" fontWeight="700">
      <text x="678" y="545" fill="#2626c8">z</text>
      <text x="734" y="559" fill="#d8d060">x</text>
      <text x="629" y="559" fill="#b8d060">y</text>
    </g>
    <g fill="none">
      <path d="M307.500 700v-14" stroke="#2020b0" strokeWidth="1.500" />
      <path d="M307 700l16-9" stroke="#8c2a2a" />
      <path d="M307 700l-9-7" stroke="#256b2c" />
    </g>
    <g fontFamily="Roboto" fontSize="8">
      <text x="308" y="687" fill="#2626c8">z</text>
      <text x="322" y="694" fill="#a03030">x</text>
      <text x="294" y="694" fill="#2c7a34">y</text>
    </g>
  </Scene>
);

const TopBars = () => (
  <>
    <TitleBar>
      <Icon n="logo" s={12} />
      <span>Untitled - Autodesk 3ds Max 2018</span>
      <Caps>
        <IconButton aria-label="Minimize"><Icon n="minimize" s={9} /></IconButton>
        <IconButton aria-label="Restore"><Icon n="restore" s={10} /></IconButton>
        <IconButton aria-label="Close"><Icon n="quit" s={9} /></IconButton>
      </Caps>
    </TitleBar>
    <MenuBar>
      <MenuList>
        {menus.map((m) => (
          <li key={m}><MenuButton><MenuName name={m} /></MenuButton></li>
        ))}
      </MenuList>
      <SignIn><Icon n="user" s={12} />Sign In<DownMark /></SignIn>
      <Workspaces>Workspaces:<Select $w={103} $h={16} defaultValue="Default"><option>Default</option></Select></Workspaces>
    </MenuBar>
    <ToolRow>
      <Grip $w={5} $ml={2} />
      <ToolGroup w={50} names={["undo", "redo"]} s={17} />
      <Sep $w={4} />
      <ToolGroup w={75} names={["link", "unlink", "bind"]} s={17} />
      <Sep $w={5} />
      <Select $w={52} $h={15} aria-label="Selection filter" defaultValue="All"><option>All</option></Select>
      <ToolGroup w={100} names={["selObj", "selName", "region", "windowX"]} />
      <Sep $w={6} />
      <ToolGroup w={99} names={["move", "rotate", "scale", "place"]} active={["move"]} s={18} />
      <Select $w={53} $h={15} aria-label="Reference coordinate system" defaultValue="View"><option>View</option></Select>
      <ToolGroup w={26} names={["pivot"]} />
      <Sep $w={4} />
      <ToolGroup w={50} names={["manip", "keyb"]} active={["keyb"]} s={18} />
      <Sep $w={4} />
      <ToolGroup w={99} names={["snap", "angle", "percent", "spin"]} s={18} />
      <Sep $w={5} />
      <ToolGroup w={25} names={["named"]} s={18} />
      <Select $w={92} $h={15} aria-label="Named selection sets" defaultValue="c"><option value="c">Create Selection Se</option></Select>
      <Sep $w={6} />
      <ToolGroup w={50} names={["mirror", "align"]} s={18} />
      <Sep $w={4} />
      <ToolGroup w={50} names={["table", "layersOn"]} active={["layersOn"]} s={18} />
      <Sep $w={5} />
      <ToolGroup w={75} names={["ribbon", "curve", "schematic"]} active={["ribbon"]} s={18} />
      <Sep $w={4} />
      <ToolGroup w={25} names={["material"]} s={18} />
      <Sep $w={4} />
      <ToolGroup w={124} names={["rsetup", "rframe", "render", "rcloud", "gallery"]} s={18} />
      <Grip $w={7} />
      <TextButton $flat $w={54}>Proxy</TextButton>
      <TextButton $flat $w={54}>Converter</TextButton>
      <TextButton $flat $w={54}>Copitor</TextButton>
      <ToolGroup w={50} ml={2} names={["ball", "rb"]} />
    </ToolRow>
    <ToolRow>
      <Grip $w={5} $ml={2} />
      <ToolGroup w={323} s={19} names={["prsx", "lines", "rcur", "eyes", "xballs", "abc", "minus", "plusb", "swap", "brush", "down", "noise", "prs"]} />
      <Grip $w={7} />
      <ToolGroup w={25} s={19} names={["bm"]} />
      <TextButton $flat $w={52}>Attacher</TextButton>
      <TextButton $flat $w={57}>albedo</TextButton>
      <ToolGroup w={48} ml={24} names={["flag", "film"]} s={18} />
      <TextButton $flat $w={58}>DeattachByMa</TextButton>
      <TextButton $flat $w={54}>lect by Materi</TextButton>
      <TextButton $flat $w={56}>MultimatName</TextButton>
      <Grip $w={5} $ml={24} />
      <ToolGroup w={99} names={["fp", "forest", "tools", "sheet"]} />
      <Grip $w={8} />
      <ToolGroup w={75} names={["rc", "tools", "sheet"]} />
      <Grip $w={7} />
      <ToolGroup w={398} s={18} names={["corona", "bulb", "sun", "cam", "trees", "listbox", "halftree", "cardtree", "swirl", "stack", "quad", "playwin", "camadd", "tealwin", "potline", "bulbline"]} />
    </ToolRow>
  </>
);

const SceneExplorer = () => (
  <Explorer>
    <Tabs>
      <Tab $on $w={134}>Scene Explorer - Layer Explorer</Tab>
      <Tab $w={94}>Viewport Layout Tabs</Tab>
    </Tabs>
    <Dots />
    <ExplorerMenu>
      <button>Select</button>
      <button>Display</button>
      <button>Edit</button>
      <button>Customize</button>
    </ExplorerMenu>
    <SearchRow>
      <SearchField aria-label="Search" />
      <SmallButton aria-label="Clear search"><Icon n="close" s={8} /></SmallButton>
      <SmallButton $active aria-label="Filter"><Icon n="filterOn" s={13} /></SmallButton>
      <Sep $w={5} />
      {["lock", "addLayer", "layersA", "hier", "layers"].map((n) => (
        <SmallButton key={n} aria-label={n}><Icon n={n} s={11} /></SmallButton>
      ))}
      <More>»</More>
    </SearchRow>
    <ExplorerBody>
      <SideBar>
        <SideStack $h={212}>
          {filters.map((n) => (
            <SmallButton key={n} $active $w={17} $h={16} aria-label={n}><Icon n={n} s={12} /></SmallButton>
          ))}
        </SideStack>
        <SideRule />
        <SideStack $h={51}>
          {["doc", "blank", "docline"].map((n) => (
            <SmallButton key={n} $w={17} $h={15} aria-label={n}><Icon n={n} s={11} /></SmallButton>
          ))}
        </SideStack>
        <SideRule />
        <SideStack $h={51}>
          {["funnelOff", "funnel", "folder"].map((n) => (
            <SmallButton key={n} $w={17} $h={15} aria-label={n}><Icon n={n} s={11} /></SmallButton>
          ))}
        </SideStack>
      </SideBar>
      <TreePane>
        <TreeHead>Name (Sorted Ascending)</TreeHead>
        <ul>
          <TreeRow $pl={3}>
            <TreeArrow />
            <Icon n="eye" s={10} />
            <Icon n="layersT" s={10} />
            <TreeName $bg="#40578f">0 (default)</TreeName>
          </TreeRow>
          {objects.map((o) => (
            <TreeRow key={o.name} $pl={28}>
              <Icon n="eye" s={10} />
              <Icon n={o.icon} s={10} />
              <TreeName $bg={o.bg}>{o.name}</TreeName>
            </TreeRow>
          ))}
        </ul>
        <HScroll>
          <Glyph viewBox="0 0 10 10" $s={8}><path d="M7 1L3 5l4 4" {...st("#111", 1.5)} /></Glyph>
          <HThumb />
          <Glyph viewBox="0 0 10 10" $s={8}><path d="M3 1l4 4-4 4" {...st("#111", 1.5)} /></Glyph>
        </HScroll>
      </TreePane>
    </ExplorerBody>
    <ExplorerFoot>
      <LayerBox aria-label="Explorer" defaultValue="Layer Explorer"><option>Layer Explorer</option></LayerBox>
      <Sep $w={4} />
      <SmallButton $active aria-label="Layers"><Icon n="layersW" s={12} /></SmallButton>
      <SmallButton aria-label="Hierarchy"><Icon n="org" s={11} /></SmallButton>
      <Sep $w={6} />
      <span>Selection Set:</span>
      <More>»</More>
    </ExplorerFoot>
  </Explorer>
);

const StylePanel = () => (
  <StyleBody>
    <Preview>No Image</Preview>
    <Row $h={15} $pl={5} $gap={2}>
      <TextButton $w={96}>none</TextButton>
      <SmallButton $w={14} $h={14} aria-label="Help"><Icon n="help" s={12} /></SmallButton>
    </Row>
    <Row $h={21} $pl={10} $pr={8} $gap={5}>
      <SmallButton $w={14} $h={14} aria-label="Edit style"><Icon n="pencil" s={13} /></SmallButton>
      <Push />
      <SmallButton $w={14} $h={14} aria-label="Load"><Icon n="arrG" s={12} /></SmallButton>
      <SmallButton $w={14} $h={14} aria-label="Merge"><Icon n="arrY" s={12} /></SmallButton>
      <SmallButton $w={14} $h={14} aria-label="Export"><Icon n="arrR" s={12} /></SmallButton>
    </Row>
    <Row $h={27} $pl={18}>No Active Generators</Row>
    <Frame $h={59}>
      <legend>Master Style</legend>
      <Row $h={10} $pr={3}><Push /><TextButton $w={29} $h={11}>Clear</TextButton></Row>
      <Row $h={21} $pl={5} $gap={2}>
        <TextButton $w={96} $h={14}>None</TextButton>
        <SmallButton $w={14} $h={14} aria-label="Refresh"><Icon n="refresh" s={11} /></SmallButton>
      </Row>
      <Row $h={15} $pl={13}><Label><Check defaultChecked />Copy Material</Label></Row>
    </Frame>
    <Frame $h={170} $m="6px 0 0">
      <legend>Geometry</legend>
      <Row $mt={4} $gap={8}><Caption $w={60}>Global Scale</Caption><Spin label="Global Scale" value="100.0" w={37} /><span>%</span></Row>
      <Row $gap={8}><Caption $w={60}>Curve Steps</Caption><Spin label="Curve Steps" value="0" w={45} /></Row>
      <Row $gap={5}><Caption $w={63}>Surface Interp.</Caption><Spin label="Surface Interp." value="50.0mm" w={45} /></Row>
      <Row $h={16} $mt={5} $pl={9}><Label><Check />Simple Y Offset mode</Label></Row>
      <Row $h={15} $mt={4} $pl={9}><Label><Check />Vertex Weld</Label></Row>
      <Row $h={13} $gap={5}><Caption $w={59}>Threshold</Caption><Spin label="Threshold" value="0.1mm" w={48} /></Row>
      <Row $h={16} $mt={2} $pl={9}><Label><Check />Use Segment Material</Label></Row>
      <Row $h={16} $mt={3} $pl={9}><Label><Check />Free Object</Label></Row>
    </Frame>
  </StyleBody>
);

const CommandPanel = () => (
  <Command>
    <Dots $mt={2} />
    <CommandTabs>
      {["create", "modify", "hierarchy", "motion", "display", "wrench"].map((n) => (
        <CommandTab key={n} $on={n === "modify"} aria-label={n}><Icon n={n} s={13} /></CommandTab>
      ))}
    </CommandTabs>
    <Columns>
      <ColumnA>
        <NameRow><Field aria-label="Object name" defaultValue="RailClone001" /><Swatch /></NameRow>
        <Select $h={16} aria-label="Modifier List" defaultValue="Modifier List"><option>Modifier List</option></Select>
        <Stack><StackItem>RailClone</StackItem></Stack>
        <StackBar>
          <SmallButton aria-label="Pin stack"><Icon n="pin" s={10} /></SmallButton>
          <Sep $w={9} />
          <SmallButton $active $w={18} $h={17} aria-label="Show end result"><Icon n="tube" s={13} /></SmallButton>
          <Sep $w={10} />
          <SmallButton aria-label="Make unique"><Icon n="unique" s={12} /></SmallButton>
          <SmallButton aria-label="Remove modifier"><Icon n="trash" s={12} /></SmallButton>
          <Sep $w={8} />
          <SmallButton aria-label="Configure sets"><Icon n="config" s={12} /></SmallButton>
        </StackBar>
        <Splitter />
        <RollArea>
          <Rolls $gap={3}>
            <Rollout><Head>About</Head></Rollout>
            <Rollout><Head>General</Head></Rollout>
            <Rollout><Head open>Style</Head><StylePanel /></Rollout>
          </Rolls>
          <VBar $len={96} />
        </RollArea>
      </ColumnA>
      <ColumnB>
        <Rolls $gap={2}>
          <Rollout $h={215}>
            <Head open>Base Objects</Head>
            <ObjBody>
              <ObjList />
              <Frame $h={109}>
                <legend>Properties</legend>
                <Row $h={16} $pl={5} $pr={24} $mt={1}><span>Object</span><Push /><TextButton $dim $w={32} $h={13}>Clear</TextButton></Row>
                <Row $h={16} $pl={5}><TextButton $dim $w={103} $h={14}>Pick</TextButton></Row>
              </Frame>
            </ObjBody>
          </Rollout>
          <Rollout $h={134}>
            <Head open>Parameters</Head>
            <ObjBody><ObjList /></ObjBody>
          </Rollout>
          <Rollout $grow>
            <Head open>Display</Head>
            <Frame $h={177} $m="0 19px 0 15px">
              <legend>Viewport</legend>
              <Row $pl={6} $gap={10} $mt={4}>
                <Label $gap={5}><Radio name="mode" defaultChecked />Mesh</Label>
                <Label $gap={5}><Radio name="mode" />Quick Mesh</Label>
              </Row>
              <Row $pl={6}><Label $gap={5}><Radio name="mode" />Boxes</Label></Row>
              <Row $pl={6} $pr={3}><Label $gap={5}><Radio name="mode" />Adaptative</Label><Push /><Spin label="Adaptative count" value="100000" w={48} /></Row>
              <Row $h={18} $pl={2}><label htmlFor="degrade">Degrade to</label><Push /><Select id="degrade" $w={62} $h={14} $m="0 3px 0 0" defaultValue="p"><option value="p">Poin...loud</option></Select></Row>
              <Row $h={19} $pl={6}><Label $gap={5}><Radio name="mode" />Points-Cloud</Label></Row>
              <Row $h={14} $gap={6}><Caption $w={62}>Global Density</Caption><Spin label="Global Density" value="50" w={34} /><span>%</span></Row>
              <Row $h={15} $gap={6}><Caption $w={62}>Local Density</Caption><Spin label="Local Density" value="50" w={34} /><span>%</span></Row>
              <Row $h={23} $pl={9}><Label $gap={9}>Shade<Range defaultValue="50" /></Label></Row>
              <Row $pl={23}><Label><Check />Use Object Color</Label></Row>
            </Frame>
            <Row $h={20} $pl={28} $gap={10} $mt={8}>
              <TextButton $w={48} $h={20}>Build</TextButton>
              <Label><Check defaultChecked />Auto</Label>
            </Row>
            <Row $h={16} $mt={8} $pl={38}><Label><Check />Disable Object</Label></Row>
          </Rollout>
        </Rolls>
        <VBar $len={79} />
      </ColumnB>
    </Columns>
  </Command>
);

const BottomBars = () => (
  <>
    <Timeline>
      <TallGrip />
      <TimeBody>
        <SliderRow>
          <TimeButton $w={11}>&lt;</TimeButton>
          <TimeButton $w={96}>0 / 100</TimeButton>
          <TimeButton $w={11}>&gt;</TimeButton>
        </SliderRow>
        <RulerRow>
          <RulerIcon><Icon n="curveMini" s={11} /></RulerIcon>
          <Ruler>
            {Array.from({ length: 101 }, (_, i) => (
              <Tick key={i} $major={i % 5 === 0} $cur={i === 0}>{i % 5 === 0 ? i : ""}</Tick>
            ))}
          </Ruler>
        </RulerRow>
      </TimeBody>
    </Timeline>
    <Status>
      <Listener />
      <StatusText>1 Object Selected</StatusText>
      <Strip>
        <SmallButton $w={21} aria-label="Isolate selection"><Icon n="isolate" s={11} /></SmallButton>
        <SmallButton $w={21} aria-label="Selection lock"><Icon n="lock" s={11} /></SmallButton>
        <SmallButton $w={22} aria-label="Absolute mode"><Icon n="abs" s={11} /></SmallButton>
      </Strip>
      <Strip $w={284}>
        <Coord>X: <Spin label="X" value="1835.306m" w={51} /></Coord>
        <Coord>Y: <Spin label="Y" value="-1758.409" w={51} /></Coord>
        <Coord>Z: <Spin label="Z" value="0.0mm" w={51} /></Coord>
        <span>Grid = 1000.0mm</span>
      </Strip>
      <Strip $w={95} $mr={9}>
        {["first", "prev", "play", "next", "last"].map((n) => (
          <IconButton key={n} aria-label={n}><Icon n={n} s={11} /></IconButton>
        ))}
      </Strip>
      <KeyButton aria-label="Set key"><Icon n="key" s={18} /></KeyButton>
      <KeyColumn $w={36} $ml={4}>
        <TextButton>Auto Key</TextButton>
        <TextButton>Set Key</TextButton>
      </KeyColumn>
      <KeyColumn $w={88} $ml={4}>
        <Select aria-label="Key set" defaultValue="Selected"><option>Selected</option></Select>
        <TextButton>Key Filters...</TextButton>
      </KeyColumn>
      <Strip $w={75}>
        <ToolGroup w={75} ml={5} names={["zoom", "zoomAll", "extents", "fov"]} s={12} />
      </Strip>
    </Status>
  </>
);

export default function App() {
  return (
    <Shell>
      <Global />
      <TopBars />
      <Main>
        <SceneExplorer />
        <Viewport>
          <ViewLabel>[ + ] [Perspective ] [Standard ] [Edged Faces ]</ViewLabel>
          <SceneDrawing />
        </Viewport>
        <CommandPanel />
      </Main>
      <BottomBars />
    </Shell>
  );
}
